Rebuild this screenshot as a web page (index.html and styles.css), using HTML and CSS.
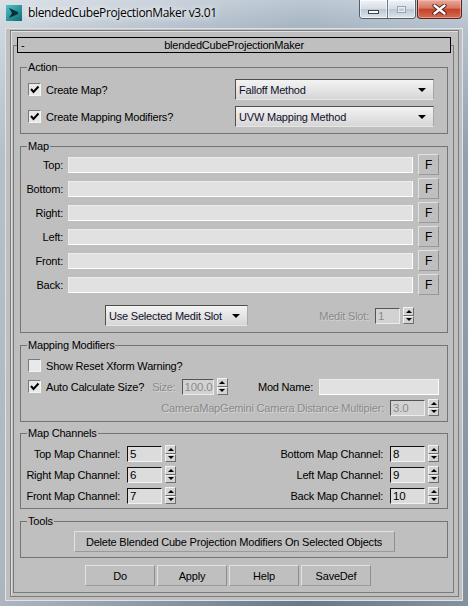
FILE: index.html
```html
<!DOCTYPE html>
<html lang="en">
<head>
  <meta charset="UTF-8" />
  <title>blendedCubeProjectionMaker v3.01</title>
  <link rel="stylesheet" href="styles.css">
</head>
<body>
<div class="window">

  <div class="titlebar">
    <svg class="app-icon" width="16" height="16" viewBox="0 0 16 16">
      <defs>
        <linearGradient id="ic" x1="0" y1="0" x2="1" y2="1">
          <stop offset="0" stop-color="#4fc4c8"/>
          <stop offset="1" stop-color="#0d6a72"/>
        </linearGradient>
      </defs>
      <rect x="0" y="0" width="16" height="16" fill="url(#ic)"/>
      <path d="M3 3 L12 7 L12 9 L3 13 L6 8 Z" fill="#0b2f3a"/>
    </svg>
    <span class="title">blendedCubeProjectionMaker v3.01</span>
    <div class="caption">
      <div class="cap-group">
        <div class="cap-btn cap-min"><span></span></div>
        <div class="cap-btn cap-max"><span></span></div>
      </div>
      <div class="cap-close">
        <svg width="15" height="11" viewBox="0 0 15 11">
          <path d="M2.5 1.5 L12.5 9.5 M12.5 1.5 L2.5 9.5" stroke="#4a1a14" stroke-width="4.2" stroke-linecap="round"/>
          <path d="M2.5 1.5 L12.5 9.5 M12.5 1.5 L2.5 9.5" stroke="#ffffff" stroke-width="2.4" stroke-linecap="round"/>
        </svg>
      </div>
    </div>
  </div>

  <div class="client">
    <div class="panel">
      <div class="rollout-head">
        <span class="minus">-</span>
        <span class="head-title">blendedCubeProjectionMaker</span>
        <span></span>
      </div>

      <div class="rollout">

        <fieldset class="group">
          <legend>Action</legend>
          <div class="action-body">
            <div class="row spread">
              <label class="check"><span class="box"><svg width="11" height="11" viewBox="0 0 11 11"><path d="M2 5 L4.5 8 L9.5 2.5" fill="none" stroke="#000" stroke-width="2"/></svg></span>Create Map?</label>
              <div class="dropdown action-drop">Falloff Method</div>
            </div>
            <div class="row spread">
              <label class="check"><span class="box"><svg width="11" height="11" viewBox="0 0 11 11"><path d="M2 5 L4.5 8 L9.5 2.5" fill="none" stroke="#000" stroke-width="2"/></svg></span>Create Mapping Modifiers?</label>
              <div class="dropdown action-drop">UVW Mapping Method</div>
            </div>
          </div>
        </fieldset>

        <fieldset class="group">
          <legend>Map</legend>
          <div class="map-body">
            <div class="map-row"><span class="map-label">Top:</span><div class="field"></div><div class="btn f-btn">F</div></div>
            <div class="map-row"><span class="map-label">Bottom:</span><div class="field"></div><div class="btn f-btn">F</div></div>
            <div class="map-row"><span class="map-label">Right:</span><div class="field"></div><div class="btn f-btn">F</div></div>
            <div class="map-row"><span class="map-label">Left:</span><div class="field"></div><div class="btn f-btn">F</div></div>
            <div class="map-row"><span class="map-label">Front:</span><div class="field"></div><div class="btn f-btn">F</div></div>
            <div class="map-row"><span class="map-label">Back:</span><div class="field"></div><div class="btn f-btn">F</div></div>
            <div class="row medit-row">
              <div class="dropdown medit-drop">Use Selected Medit Slot</div>
              <div class="spinner medit-spin">
                <span class="lbl disabled">Medit Slot:</span>
                <div class="spin-field off w25">1</div>
                <div class="spin-arrows"><i class="up"></i><i class="down"></i></div>
              </div>
            </div>
          </div>
        </fieldset>

        <fieldset class="group">
          <legend>Mapping Modifiers</legend>
          <div class="mm-body">
            <div class="mm-row">
              <label class="check"><span class="box"></span>Show Reset Xform Warning?</label>
            </div>
            <div class="mm-row">
              <label class="check"><span class="box"><svg width="11" height="11" viewBox="0 0 11 11"><path d="M2 5 L4.5 8 L9.5 2.5" fill="none" stroke="#000" stroke-width="2"/></svg></span>Auto Calculate Size?</label>
              <div class="spinner size-spin">
                <span class="lbl disabled">Size:</span>
                <div class="spin-field off w32">100.0</div>
                <div class="spin-arrows"><i class="up"></i><i class="down"></i></div>
              </div>
              <div class="modname">
                <span class="lbl">Mod Name:</span>
                <div class="field w120"></div>
              </div>
            </div>
            <div class="mm-row end">
              <div class="spinner">
                <span class="lbl disabled">CameraMapGemini Camera Distance Multipier:</span>
                <div class="spin-field off w35">3.0</div>
                <div class="spin-arrows"><i class="up"></i><i class="down"></i></div>
              </div>
            </div>
          </div>
        </fieldset>

        <fieldset class="group channels">
          <legend>Map Channels</legend>
          <div class="mc-body">
            <div class="mc-cell"><span class="lbl">Top Map Channel:</span><div class="spin-field w35">5</div><div class="spin-arrows"><i class="up"></i><i class="down"></i></div></div>
            <div class="mc-cell"><span class="lbl">Bottom Map Channel:</span><div class="spin-field w35">8</div><div class="spin-arrows"><i class="up"></i><i class="down"></i></div></div>
            <div class="mc-cell"><span class="lbl">Right Map Channel:</span><div class="spin-field w35">6</div><div class="spin-arrows"><i class="up"></i><i class="down"></i></div></div>
            <div class="mc-cell"><span class="lbl">Left Map Channel:</span><div class="spin-field w35">9</div><div class="spin-arrows"><i class="up"></i><i class="down"></i></div></div>
            <div class="mc-cell"><span class="lbl">Front Map Channel:</span><div class="spin-field w35">7</div><div class="spin-arrows"><i class="up"></i><i class="down"></i></div></div>
            <div class="mc-cell"><span class="lbl">Back Map Channel:</span><div class="spin-field w35">10</div><div class="spin-arrows"><i class="up"></i><i class="down"></i></div></div>
          </div>
        </fieldset>

        <fieldset class="group">
          <legend>Tools</legend>
          <div class="tools-body">
            <div class="btn delete-btn">Delete Blended Cube Projection Modifiers On Selected Objects</div>
          </div>
        </fieldset>

        <div class="bottom-buttons">
          <div class="btn main-btn">Do</div>
          <div class="btn main-btn">Apply</div>
          <div class="btn main-btn">Help</div>
          <div class="btn main-btn">SaveDef</div>
        </div>

      </div>
    </div>
  </div>

</div>
</body>
</html>
```

FILE: styles.css
```css
/* Window frame */
html, body {
  margin: 0;
  padding: 0;
}
body {
  width: 468px;
  height: 606px;
  overflow: hidden;
  font-family: "Liberation Sans", Arial, sans-serif;
  font-size: 11px;
  letter-spacing: -0.2px;
  color: #000;
}
.window {
  width: 468px;
  height: 606px;
  box-sizing: border-box;
  padding: 0 5px 5px 5px;
  display: flex;
  flex-direction: column;
  background:
    linear-gradient(90deg, rgba(255,255,255,0.5), rgba(255,255,255,0.08) 65%, rgba(255,255,255,0.25)),
    linear-gradient(180deg, #b7c3cf 0, #9dadbd 28px, #6f8194 150px, #5b6d80 100%);
}

/* Title bar */
.titlebar {
  height: 28px;
  flex: none;
  margin: 0 -5px;
  padding: 0 6px;
  display: flex;
  align-items: flex-start;
}
.app-icon {
  margin-top: 5px;
  flex: none;
}
.title {
  margin-left: 6px;
  margin-top: 4px;
  font-family: "Open Sans", sans-serif;
  font-size: 12px;
  letter-spacing: -0.35px;
  line-height: 18px;
  color: #000;
  text-shadow: 0 0 6px #fff, 0 0 10px rgba(255,255,255,0.9);
}
.caption {
  margin-left: auto;
  display: flex;
}
.cap-group {
  display: flex;
  height: 19px;
  box-sizing: border-box;
  border: 1px solid #535e6c;
  border-top: none;
  border-radius: 0 0 4px 4px;
  overflow: hidden;
}
.cap-btn {
  width: 27px;
  display: flex;
  align-items: center;
  justify-content: center;
  background: linear-gradient(#f1f4f7, #d4dce5 48%, #bcc7d3 52%, #dde4eb);
  box-shadow: inset 0 0 0 1px rgba(255,255,255,0.6);
}
.cap-min {
  border-right: 1px solid #6b7786;
}
.cap-min span {
  width: 9px;
  height: 2px;
  margin-top: 6px;
  background: #fff;
  border: 1px solid #3c4450;
}
.cap-max span {
  width: 7px;
  height: 5px;
  margin-top: 1px;
  border: 1px solid #9aa4b0;
  box-shadow: inset 0 0 0 1px #e9edf1;
}
.cap-close {
  width: 45px;
  height: 19px;
  margin-left: 1px;
  box-sizing: border-box;
  border: 1px solid #5a2720;
  border-top: none;
  border-radius: 0 0 4px 4px;
  display: flex;
  align-items: center;
  justify-content: center;
  background: linear-gradient(#eaaa9c, #d67660 45%, #c4432b 52%, #d56c52);
  box-shadow: inset 0 0 0 1px rgba(255,200,190,0.5);
}

/* Client area and rollout */
.client {
  flex: 1;
  border: 1px solid #dfe3e7;
  background: #bfbfbf;
  display: flex;
  flex-direction: column;
}
.panel {
  flex: 1;
  margin: 1px 3px 3px 4px;
  border: 1px solid #7b7b7b;
  box-shadow: inset 1px 1px 0 #e0e0e0;
  display: flex;
  flex-direction: column;
}
.rollout-head {
  position: relative;
  z-index: 1;
  height: 16px;
  box-sizing: border-box;
  margin: 6px 7px -8px 6px;
  border: 1px solid #000;
  background: #bfbfbf;
  display: grid;
  grid-template-columns: 1fr auto 1fr;
  align-items: center;
  line-height: 14px;
}
.minus {
  padding-left: 3px;
}
.rollout {
  flex: 1;
  margin: 0 4px 3px 2px;
  border: 1px solid #7b7b7b;
  padding: 14px 5px 0 6px;
  display: flex;
  flex-direction: column;
  gap: 5px;
}

/* Group boxes */
.group {
  margin: 0;
  padding: 0;
  min-width: 0;
  border: 1px solid #747474;
}
.group legend {
  margin-left: 6px;
  padding: 0 1px;
  line-height: 14px;
}
.channels {
  margin-top: -1px;
}
.row {
  display: flex;
  align-items: center;
  height: 21px;
}
.spread {
  justify-content: space-between;
}

/* Action */
.action-body {
  padding: 5px 13px 6px 7px;
  display: flex;
  flex-direction: column;
  gap: 6px;
}
.action-drop {
  width: 199px;
}

/* Checkbox */
.check {
  display: flex;
  align-items: center;
  gap: 5px;
}
.box {
  width: 13px;
  height: 13px;
  box-sizing: border-box;
  border: 1px solid;
  border-color: #7a7a7a #f4f4f4 #f4f4f4 #7a7a7a;
  background: #e9e9e9;
  display: flex;
  align-items: center;
  justify-content: center;
}

/* Dropdown */
.dropdown {
  height: 21px;
  box-sizing: border-box;
  border: 1px solid;
  border-color: #4e4e4e #a8a8a8 #e6e6e6 #4e4e4e;
  background: linear-gradient(#f3f3f3, #e2e2e2 60%, #d6d6d6);
  padding-left: 3px;
  display: flex;
  align-items: center;
  color: #10102a;
  font-size: 11px;
}
.dropdown::after {
  content: "";
  margin-left: auto;
  margin-right: 7px;
  border-left: 4px solid transparent;
  border-right: 4px solid transparent;
  border-top: 4px solid #000;
}

/* Map */
.map-body {
  padding: 1px 8px 6px 0;
  display: flex;
  flex-direction: column;
  gap: 3px;
}
.map-row {
  display: grid;
  grid-template-columns: 42px 345px 21px;
  column-gap: 5px;
  align-items: center;
  height: 21px;
}
.map-label {
  text-align: right;
}
.field {
  height: 16px;
  box-sizing: border-box;
  border: 1px solid;
  border-color: #ececec #fbfbfb #ffffff #ececec;
  background: #e1e1e1;
}
.w120 {
  width: 120px;
}
.medit-row {
  margin-top: 7px;
}
.medit-drop {
  width: 143px;
  margin-left: 84px;
}
.medit-spin {
  margin-left: auto;
  margin-right: 25px;
}

/* Spinners */
.spinner {
  display: flex;
  align-items: center;
}
.lbl {
  margin-right: 6px;
  white-space: nowrap;
}
.disabled {
  color: #8a8a8a;
  text-shadow: 1px 1px 0 rgba(255,255,255,0.35);
}
.spin-field {
  height: 16px;
  box-sizing: border-box;
  border: 1px solid;
  border-color: #111 #f2f2f2 #f2f2f2 #111;
  background: #dcdcdc;
  padding-left: 2px;
  line-height: 14px;
  font-size: 11.5px;
}
.spin-field.off {
  border-color: #555 #ececec #ececec #555;
  background: #d2d2d2;
  color: #8a8a8a;
}
.w25 { width: 25px; }
.w32 { width: 32px; }
.w35 { width: 35px; }
.spin-arrows {
  width: 11px;
  height: 17px;
  margin-left: 3px;
  display: flex;
  flex-direction: column;
}
.spin-arrows i {
  flex: 1;
  box-sizing: border-box;
  border: 1px solid;
  border-color: #f2f2f2 #6e6e6e #6e6e6e #f2f2f2;
  background: #d4d4d4;
  display: flex;
  align-items: center;
  justify-content: center;
}
.spin-arrows .up::after {
  content: "";
  border-left: 3px solid transparent;
  border-right: 3px solid transparent;
  border-bottom: 3px solid #000;
}
.spin-arrows .down::after {
  content: "";
  border-left: 3px solid transparent;
  border-right: 3px solid transparent;
  border-top: 3px solid #000;
}

/* Mapping modifiers */
.mm-body {
  padding: 5px 8px 5px 7px;
  display: flex;
  flex-direction: column;
  gap: 4px;
}
.mm-row {
  height: 17px;
  display: flex;
  align-items: center;
}
.mm-row.end {
  justify-content: flex-end;
}
.size-spin {
  margin-left: 8px;
}
.modname {
  margin-left: auto;
  display: flex;
  align-items: center;
}

/* Map channels */
.mc-body {
  padding: 5px 8px 4px 0;
  display: grid;
  grid-template-columns: 155px 1fr;
  row-gap: 4px;
}
.mc-cell {
  height: 17px;
  display: flex;
  align-items: center;
  justify-content: flex-end;
}
.mc-cell .lbl {
  margin-right: 7px;
}

/* Buttons */
.btn {
  height: 21px;
  box-sizing: border-box;
  border: 1px solid;
  border-color: #e2e2e2 #8e8e8e #9a9a9a #e2e2e2;
  background: #bfbfbf;
  display: flex;
  align-items: center;
  justify-content: center;
}
.f-btn {
  font-size: 12px;
}
.tools-body {
  padding: 3px 0 5px;
  display: flex;
  justify-content: center;
}
.delete-btn {
  width: 321px;
}
.bottom-buttons {
  margin: 2px 0 6px 65px;
  display: flex;
  gap: 2px;
}
.main-btn {
  width: 70px;
}
```
